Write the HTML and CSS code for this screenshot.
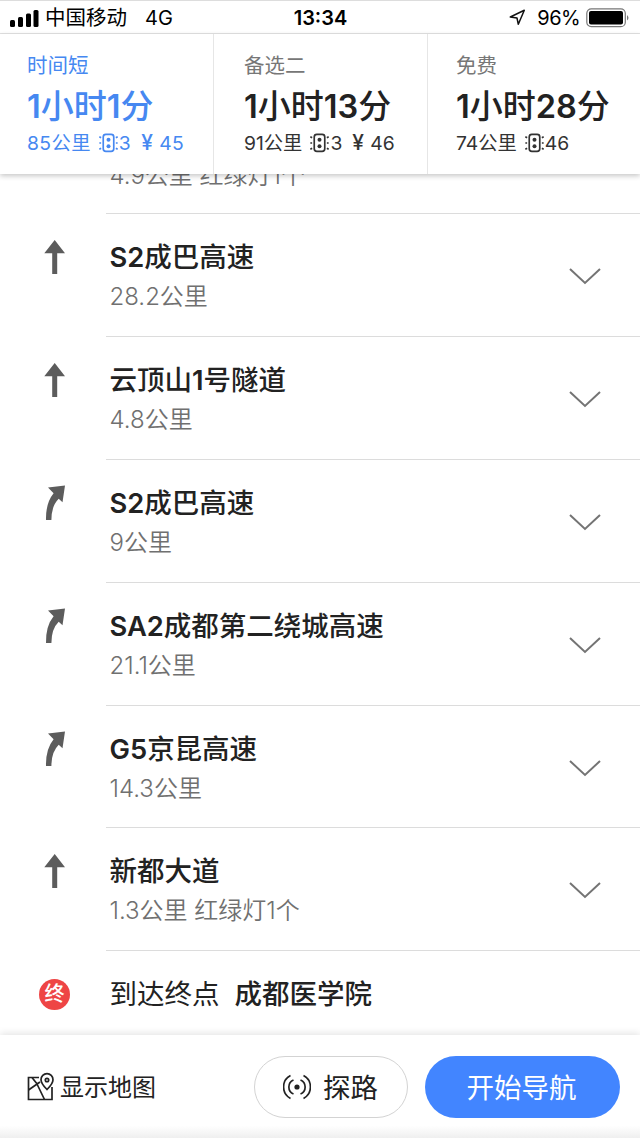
FILE: index.html
```html
<!DOCTYPE html>
<html lang="zh-CN">
<head>
<meta charset="utf-8">
<title>路线详情</title>
<link rel="stylesheet" href="styles.css">
</head>
<body>
<svg class="defs" width="0" height="0" aria-hidden="true">
  <symbol id="straight" viewBox="0 0 24 36"><path d="M11.700 1 22 14.300H14.200V35H9.200V14.300H1.300Z"/></symbol>
  <symbol id="right" viewBox="0 0 24 36"><path d="M5 2.500 22 .6 19.500 17.200 15.700 13.800Q8.400 21 8.400 35H3Q2.600 18 10.600 8.200Z"/></symbol>
  <symbol id="chevron" viewBox="0 0 34 20"><path d="M2 3 17 17 32 3" fill="none" stroke="#747474" stroke-width="2"/></symbol>
  <symbol id="light" viewBox="0 0 18 19"><g fill="none" stroke="currentColor" stroke-width="1.600"><rect x="4" y="1.300" width="10" height="16.200" rx="2.500"/><path d="M.3 3.600 2 4.600M.3 9.500H2M.3 15.400 2 14.400M17.700 3.600 16 4.600M17.700 9.500H16M17.700 15.400 16 14.400"/></g><circle cx="9" cy="6.500" r="1.900" fill="currentColor"/><circle cx="9" cy="12.500" r="1.900" fill="currentColor"/></symbol>
</svg>
<div class="app">
  <header class="status">
    <div class="carrier">
      <svg width="29" height="18" viewBox="0 0 29 18"><rect x="0" y="11" width="5" height="7" rx="1.500"/><rect x="8" y="8" width="5" height="10" rx="1.500"/><rect x="16" y="4.500" width="5" height="13.500" rx="1.500"/><rect x="23.500" y="1" width="5" height="17" rx="1.500"/></svg>
      <span class="name">中国移动</span><span class="net">4G</span>
    </div>
    <div class="clock">13:34</div>
    <div class="power">
      <svg width="17" height="17" viewBox="0 0 17 17"><path d="M1.300 8 15.300 1.300 9.300 15.300 8 9Z" fill="none" stroke="#111" stroke-width="1.500" stroke-linejoin="round"/></svg>
      <span class="percent">96%</span>
      <svg width="45" height="20" viewBox="0 0 45 20"><rect x=".8" y=".8" width="38.500" height="17.900" rx="4.500" fill="none" stroke="#777" stroke-width="1.200"/><rect x="3" y="3" width="34" height="13.500" rx="2"/><path d="M41 7q3 2.800 0 5.600Z" fill="#777"/></svg>
    </div>
  </header>

  <nav class="routes">
    <div class="route first active">
      <div class="label">时间短</div>
      <div class="time"><b>1</b>小时<b>1</b>分</div>
      <div class="meta"><span>85公里</span><svg class="light"><use href="#light"/></svg><span>3</span><span class="fee"><i>¥</i>45</span></div>
    </div>
    <div class="route second">
      <div class="label">备选二</div>
      <div class="time"><b>1</b>小时<b>13</b>分</div>
      <div class="meta"><span>91公里</span><svg class="light"><use href="#light"/></svg><span>3</span><span class="fee"><i>¥</i>46</span></div>
    </div>
    <div class="route third">
      <div class="label">免费</div>
      <div class="time"><b>1</b>小时<b>28</b>分</div>
      <div class="meta"><span>74公里</span><svg class="light"><use href="#light"/></svg><span>46</span></div>
    </div>
  </nav>

  <main class="steps">
    <div class="step clipped"><div class="body"><div class="text"><div class="dist">4.9公里 红绿灯1个</div></div></div></div>
    <div class="step"><svg class="turn"><use href="#straight"/></svg><div class="body"><div class="text"><div class="road"><b>S2</b>成巴高速</div><div class="dist">28.2公里</div></div><svg class="chevron"><use href="#chevron"/></svg></div></div>
    <div class="step"><svg class="turn"><use href="#straight"/></svg><div class="body"><div class="text"><div class="road">云顶山<b>1</b>号隧道</div><div class="dist">4.8公里</div></div><svg class="chevron"><use href="#chevron"/></svg></div></div>
    <div class="step"><svg class="turn"><use href="#right"/></svg><div class="body"><div class="text"><div class="road"><b>S2</b>成巴高速</div><div class="dist">9公里</div></div><svg class="chevron"><use href="#chevron"/></svg></div></div>
    <div class="step"><svg class="turn"><use href="#right"/></svg><div class="body"><div class="text"><div class="road"><b>SA2</b>成都第二绕城高速</div><div class="dist">21.1公里</div></div><svg class="chevron"><use href="#chevron"/></svg></div></div>
    <div class="step"><svg class="turn"><use href="#right"/></svg><div class="body"><div class="text"><div class="road"><b>G5</b>京昆高速</div><div class="dist">14.3公里</div></div><svg class="chevron"><use href="#chevron"/></svg></div></div>
    <div class="step"><svg class="turn"><use href="#straight"/></svg><div class="body"><div class="text"><div class="road">新都大道</div><div class="dist">1.3公里 红绿灯1个</div></div><svg class="chevron"><use href="#chevron"/></svg></div></div>
    <div class="step end"><span class="pin">终</span><div class="arrive">到达终点</div><div class="road">成都医学院</div></div>
  </main>

  <footer class="bar">
    <div class="map">
      <svg width="28" height="30" viewBox="0 0 28 30" fill="none" stroke="#222" stroke-width="1.700"><path d="M13 5.500H2.500V27.500H26V15"/><path d="M6 5.500 11.500 12.500M2.500 18 14 10M10.500 11 18.500 27.500"/><path d="M21 17.500Q15 11.500 15 7.700a6 6 0 0 1 12 0Q27 11.500 21 17.500Z"/><circle cx="21" cy="8" r="1.700"/></svg>
      <span>显示地图</span>
    </div>
    <div class="button explore">
      <svg width="28" height="26" viewBox="0 0 28 26" fill="none" stroke="#222" stroke-width="1.700"><circle cx="14" cy="13" r="2.600" fill="#222" stroke="none"/><path d="M10.500 6a7.600 7.600 0 0 0 0 14M17.500 6a7.600 7.600 0 0 1 0 14M7.500 1.500a13 13 0 0 0 0 23M20.500 1.500a13 13 0 0 1 0 23"/></svg>
      <span>探路</span>
    </div>
    <div class="button start"><span>开始导航</span></div>
  </footer>
</div>
</body>
</html>
```
FILE: styles.css
```css
* { box-sizing: border-box; }
body { margin: 0; background: #fff; font-family: Inter, "Noto Sans CJK SC", sans-serif; color: #222; white-space: nowrap; }
svg { flex: none; display: block; }
b { font-weight: 600; }
.defs { position: absolute; }
.app { width: 640px; height: 1138px; display: flex; flex-direction: column; overflow: hidden; }

.status { flex: none; height: 34px; display: grid; grid-template-columns: 1fr auto 1fr; align-items: center; padding: 1px 9px 0 10px; border-top: 1px solid #ddd; border-bottom: 1px solid #e2e2e2; color: #000; }
.carrier, .power { display: flex; align-items: center; }
.name { font-size: 20.500px; line-height: 26px; margin: 0 0 0 6px; }
.net { font-size: 20px; margin-left: 18px; }
.clock { font-size: 20px; font-weight: 600; }
.power { justify-content: flex-end; }
.percent { font-size: 20px; letter-spacing: -.6px; margin: 0 6px 0 11px; }

.routes { flex: none; position: relative; z-index: 1; height: 140px; display: grid; grid-template-columns: 213px 214px 213px; background: #fff; box-shadow: 0 2px 5px rgba(0,0,0,.22); }
.route { padding: 18px 0 0 30px; border-left: 1px solid #e6e6e6; }
.route.first { padding-left: 27px; border-left: 0; }
.route.third { padding-left: 28px; }
.label { height: 28px; line-height: 28px; font-size: 20.500px; color: #777; }
.time { height: 49px; line-height: 52px; font-size: 33px; font-weight: 500; }
.time b { font-size: 32.500px; }
.meta { display: flex; align-items: center; height: 28px; line-height: 28px; font-size: 19.300px; color: #333; }
.light { width: 19px; height: 20px; margin: 0 1px 0 8px; }
.fee { margin-left: 10px; }
.fee i { display: inline-block; width: 18px; font-style: normal; font-size: 21px; font-weight: 500; }
.active, .active .label, .active .meta { color: #4688f1; }
.active .meta { letter-spacing: .4px; }

.steps { flex: 1; min-height: 0; }
.step { display: flex; height: 122.880px; padding-left: 43px; }
.turn { width: 24px; height: 36px; margin: 25px 39px 0 0; fill: #5c5c5c; }
.body { flex: 1; display: flex; justify-content: space-between; border-bottom: 1px solid #dcdcdc; padding: 22px 38px 0 3.500px; }
.road { height: 42px; line-height: 42px; font-size: 27.500px; font-weight: 500; }
.road b { font-size: 27.300px; }
.dist { height: 38px; line-height: 38px; font-size: 24px; font-weight: 350; color: #707070; }
.chevron { width: 34px; height: 20px; margin-top: 30px; }
.clipped { height: 54px; margin-top: -14px; padding-left: 106px; }
.clipped .body { padding-top: 2px; }
.clipped .dist { height: 28px; line-height: 28px; }
.end { height: 86px; align-items: center; padding-left: 39px; }
.pin { width: 31px; height: 31px; border-radius: 50%; background: #ee4545; color: #fff; font-size: 20px; font-weight: 500; line-height: 30px; text-align: center; margin-right: 39.500px; }
.arrive { font-size: 27.500px; line-height: 42px; margin-right: 15px; }

.bar { flex: none; position: relative; z-index: 1; height: 103px; display: flex; align-items: flex-start; padding: 21px 20px 0 26px; background: linear-gradient(#fff 88%, #efefef); box-shadow: 0 -2px 7px rgba(0,0,0,.1); }
.map { display: flex; align-items: center; height: 62px; width: 228px; font-size: 24px; }
.map span { margin: -3px 0 0 6px; }
.button { display: flex; align-items: center; justify-content: center; height: 62px; border-radius: 31px; font-size: 27.500px; }
.button span { margin-top: -3px; }
.explore { width: 154px; border: 1px solid #d3d3d3; background: #fff; margin-right: 17px; }
.explore span { margin-left: 12px; }
.explore svg { margin-left: -1px; }
.start { width: 195px; background: #4285ff; color: #fff; padding-right: 2px; }
```
